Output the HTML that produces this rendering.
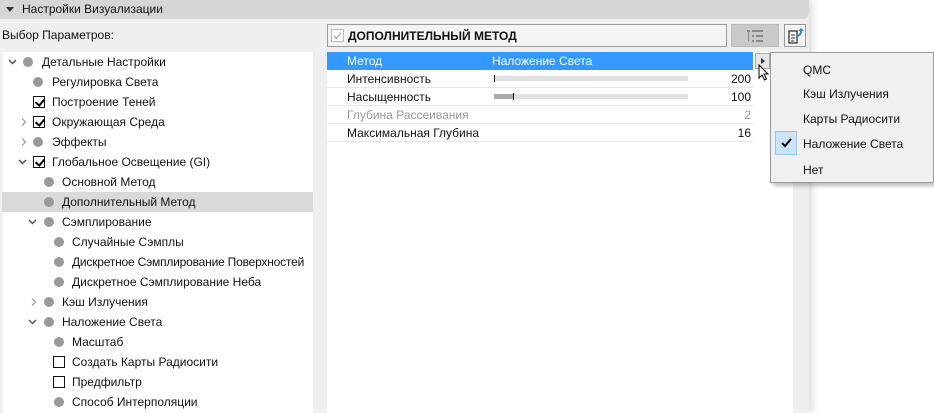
<!DOCTYPE html>
<html><head><meta charset="utf-8"><style>
*{margin:0;padding:0;box-sizing:border-box}
body{width:934px;height:413px;overflow:hidden;background:#fff;font-family:"Liberation Sans",sans-serif;font-size:12px;color:#111;position:relative}
.panel{position:absolute;left:0;top:0;width:809px;height:413px;background:#efefef;box-shadow:3px 0 8px rgba(0,0,0,.15)}
.hdr{position:absolute;left:0;top:0;width:809px;height:19px;background:#d6d6d6;border-radius:0 0 6px 0}
.hdr span{position:absolute;left:22px;top:2px}
.tri{position:absolute;left:6px;top:7px;border-left:4px solid transparent;border-right:4px solid transparent;border-top:5px solid #333}
.lbl{position:absolute;left:2px;top:28px}
.tree{position:absolute;left:3px;top:52px;width:310px;height:361px;background:#fff}
.row{position:absolute;left:0;width:310px;height:20px;line-height:20px;white-space:nowrap}
.row.sel{background:#d9d9d9}
.dot{position:absolute;top:5px;width:10px;height:10px;border-radius:50%;background:#999}
.cb{position:absolute;top:4px;width:12px;height:12px;border:1px solid #111;background:#fff}
.cb.on::after{content:"";position:absolute;left:3px;top:0px;width:4px;height:7px;border:solid #000;border-width:0 2px 2px 0;transform:rotate(40deg)}
.arr{position:absolute;top:6px}
.t{position:absolute}
.rp{position:absolute;left:327px;top:52px;width:466px;height:361px;background:#fff}
.title{position:absolute;left:327px;top:24px;width:400px;height:23px;border:1px solid #9a9a9a;background:#f4f4f4}
.title b{position:absolute;left:20px;top:4px;font-size:12px}
.btn1{position:absolute;left:731px;top:24px;width:48px;height:23px;background:#c9c9c9;border:1px solid #bdbdbd}
.btn2{position:absolute;left:784px;top:24px;width:22px;height:23px;background:#f4f4f4;border:1px solid #9a9a9a}
.tr{position:absolute;left:327px;width:426px;height:18px;line-height:18px;border-bottom:1px solid #e6e6e6}
.tr .a{position:absolute;left:20px}.tr .v{position:absolute;right:2px}
.bar{position:absolute;left:167px;top:6px;width:194px;height:5px;background:#e2e2e2}
.menu{position:absolute;left:770px;top:52px;width:164px;height:131px;background:#f0f0f0;border:1px solid #999;box-shadow:3px 3px 4px rgba(0,0,0,.25)}
.mi{position:absolute;left:32px;font-size:12px}
</style></head><body>
<div class="panel">
<div class="hdr"><div class="tri"></div><span>Настройки Визуализации</span></div>
<div class="lbl">Выбор Параметров:</div>
<div class="tree">
<div class="row" style="top:0"><svg class="arr" style="left:5px" width="9" height="8"><path d="M1 2l3.5 3.5L8 2" stroke="#555" stroke-width="1.5" fill="none"/></svg><div class="dot" style="left:20px"></div><span class="t" style="left:39px">Детальные Настройки</span></div>
<div class="row" style="top:20px"><div class="dot" style="left:30px"></div><span class="t" style="left:49px">Регулировка Света</span></div>
<div class="row" style="top:40px"><div class="cb on" style="left:30px"></div><span class="t" style="left:49px">Построение Теней</span></div>
<div class="row" style="top:60px"><svg class="arr" style="left:17px;top:5px" width="8" height="10"><path d="M2 1.5l3.5 3.5L2 8.5" stroke="#aaa" stroke-width="1.5" fill="none"/></svg><div class="cb on" style="left:30px"></div><span class="t" style="left:49px">Окружающая Среда</span></div>
<div class="row" style="top:80px"><svg class="arr" style="left:17px;top:5px" width="8" height="10"><path d="M2 1.5l3.5 3.5L2 8.5" stroke="#aaa" stroke-width="1.5" fill="none"/></svg><div class="dot" style="left:30px"></div><span class="t" style="left:49px">Эффекты</span></div>
<div class="row" style="top:100px"><svg class="arr" style="left:15px" width="9" height="8"><path d="M1 2l3.5 3.5L8 2" stroke="#555" stroke-width="1.5" fill="none"/></svg><div class="cb on" style="left:30px"></div><span class="t" style="left:49px">Глобальное Освещение (GI)</span></div>
<div class="row" style="top:120px"><div class="dot" style="left:41px"></div><span class="t" style="left:59px">Основной Метод</span></div>
<div class="row sel" style="top:140px;left:-1px;width:311px"><div class="dot" style="left:42px"></div><span class="t" style="left:60px">Дополнительный Метод</span></div>
<div class="row" style="top:160px"><svg class="arr" style="left:25px" width="9" height="8"><path d="M1 2l3.5 3.5L8 2" stroke="#555" stroke-width="1.5" fill="none"/></svg><div class="dot" style="left:41px"></div><span class="t" style="left:59px">Сэмплирование</span></div>
<div class="row" style="top:180px"><div class="dot" style="left:51px"></div><span class="t" style="left:69px">Случайные Сэмплы</span></div>
<div class="row" style="top:200px"><div class="dot" style="left:51px"></div><span class="t" style="left:69px;letter-spacing:-.2px">Дискретное Сэмплирование Поверхностей</span></div>
<div class="row" style="top:220px"><div class="dot" style="left:51px"></div><span class="t" style="left:69px">Дискретное Сэмплирование Неба</span></div>
<div class="row" style="top:240px"><svg class="arr" style="left:27px;top:5px" width="8" height="10"><path d="M2 1.5l3.5 3.5L2 8.5" stroke="#aaa" stroke-width="1.5" fill="none"/></svg><div class="dot" style="left:41px"></div><span class="t" style="left:59px">Кэш Излучения</span></div>
<div class="row" style="top:260px"><svg class="arr" style="left:25px" width="9" height="8"><path d="M1 2l3.5 3.5L8 2" stroke="#555" stroke-width="1.5" fill="none"/></svg><div class="dot" style="left:41px"></div><span class="t" style="left:59px">Наложение Света</span></div>
<div class="row" style="top:280px"><div class="dot" style="left:51px"></div><span class="t" style="left:69px">Масштаб</span></div>
<div class="row" style="top:300px"><div class="cb" style="left:50px"></div><span class="t" style="left:69px">Создать Карты Радиосити</span></div>
<div class="row" style="top:320px"><div class="cb" style="left:50px"></div><span class="t" style="left:69px">Предфильтр</span></div>
<div class="row" style="top:340px"><div class="dot" style="left:51px"></div><span class="t" style="left:69px">Способ Интерполяции</span></div>
</div>
<div class="title"><svg style="position:absolute;left:3px;top:4px" width="13" height="13"><rect x=".5" y=".5" width="12" height="12" fill="#fff" stroke="#bbb"/><path d="M3 7l2.5 2.5L10 3.5" stroke="#aaa" stroke-width="1.3" fill="none"/></svg><b>ДОПОЛНИТЕЛЬНЫЙ МЕТОД</b></div>
<div class="btn1"><svg style="position:absolute;left:14px;top:5px" width="20" height="12" fill="#888"><rect x="1" y="0" width="3" height="2"/><rect x="6" y="0" width="11" height="2"/><rect x="6" y="5" width="2" height="2"/><rect x="10" y="5" width="7" height="2"/><rect x="6" y="10" width="2" height="2"/><rect x="10" y="10" width="7" height="2"/><rect x="2" y="2" width="1" height="9"/></svg></div>
<div class="btn2"><svg style="position:absolute;left:2px;top:2px" width="18" height="18"><path d="M2 4h8v12H2z" fill="none" stroke="#333" stroke-width="1.3"/><path d="M4 8h4M4 11h4M4 14h3" stroke="#333"/><path d="M9 9c3 0 5-2 5-5" stroke="#2f7fe0" stroke-width="2" fill="none"/><path d="M11 4l3-3 3 3z" fill="#2f7fe0"/></svg></div>
<div class="rp"></div>
<div class="tr" style="top:52px;background:#3399ff;color:#fff;border:none"><span class="a">Метод</span><span class="a" style="left:165px">Наложение Света</span></div>
<div style="position:absolute;left:755px;top:53px;width:15px;height:16px;background:#e6e6e6;border:1px solid #aaa"><div style="position:absolute;left:5px;top:4px;border-top:3px solid transparent;border-bottom:3px solid transparent;border-left:4px solid #333"></div></div>
<div class="tr" style="top:70px"><span class="a">Интенсивность</span><div class="bar"><div style="position:absolute;left:0;top:-1px;width:1px;height:7px;background:#111"></div></div><span class="v">200</span></div>
<div class="tr" style="top:88px"><span class="a">Насыщенность</span><div class="bar"><div style="width:19px;height:5px;background:#aaa"></div><div style="position:absolute;left:19px;top:-1px;width:1px;height:7px;background:#111"></div></div><span class="v">100</span></div>
<div class="tr" style="top:106px;color:#999"><span class="a">Глубина Рассеивания</span><span class="v">2</span></div>
<div class="tr" style="top:124px"><span class="a">Максимальная Глубина</span><span class="v">16</span></div>
</div>
<svg style="position:absolute;left:758px;top:64px" width="12" height="18"><path d="M1 1v13l3-3 2.5 5 2-1-2.5-5h4z" fill="#fff" stroke="#000"/></svg>
<div class="menu">
<span class="mi" style="top:10px">QMC</span>
<span class="mi" style="top:34px">Кэш Излучения</span>
<span class="mi" style="top:59px">Карты Радиосити</span>
<div style="position:absolute;left:4px;top:78px;width:22px;height:24px;background:#cce4f7;border:1px solid #90c8f6"><svg style="position:absolute;left:5px;top:6px" width="11" height="10"><path d="M1 5l3 3 6-7" stroke="#000" stroke-width="2" fill="none"/></svg></div>
<span class="mi" style="top:84px">Наложение Света</span>
<span class="mi" style="top:110px">Нет</span>
</div>
</body></html>
